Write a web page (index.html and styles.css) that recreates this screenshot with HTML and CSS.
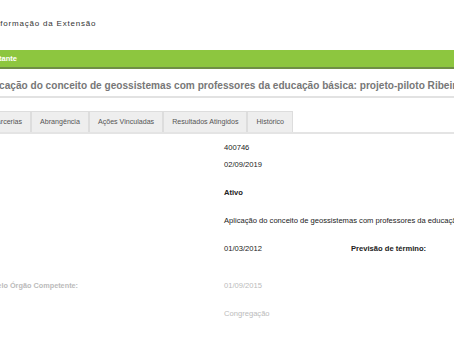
FILE: index.html
```html
<!DOCTYPE html>
<html lang="pt-BR">
<head>
  <meta charset="UTF-8">
  <title>Informação da Extensão</title>
  <link rel="stylesheet" href="styles.css">
</head>
<body>
  <div class="page">
    <h2 class="page-title">Informação da Extensão</h2>

    <div class="bar">Solicitante</div>

    <h1 class="action-title">Aplicação do conceito de geossistemas com professores da educação básica: projeto-piloto Ribeirão Preto</h1>

    <ul class="tabs">
      <li>Equipe</li>
      <li>Parcerias</li>
      <li>Abrangência</li>
      <li>Ações Vinculadas</li>
      <li>Resultados Atingidos</li>
      <li>Histórico</li>
    </ul>

    <div class="details">
      <div class="row tight"><span class="label">Código:</span><span class="value">400746</span></div>
      <div class="row"><span class="label">Data de cadastro:</span><span class="value">02/09/2019</span></div>
      <div class="row"><span class="label">Situação:</span><span class="value bold">Ativo</span></div>
      <div class="row"><span class="label">Título:</span><span class="value">Aplicação do conceito de geossistemas com professores da educação básica: projeto-piloto</span></div>
      <div class="row tall"><span class="label">Início:</span><span class="value short">01/03/2012</span><span class="label-inline">Previsão de término:</span></div>
      <div class="row muted"><span class="label">Data de aprovação pelo Órgão Competente:</span><span class="value">01/09/2015</span></div>
      <div class="row muted"><span class="label">Órgão:</span><span class="value">Congregação</span></div>
    </div>
  </div>
</body>
</html>
```

FILE: styles.css
```css
body {
  margin: 0;
  overflow: hidden;
  background: #fff;
  font-family: "Liberation Sans", Arial, sans-serif;
  color: #222;
}

.page {
  width: 760px;
  margin-left: -100px;
}

.page-title {
  margin: 0;
  padding: 19px 0 0 92px;
  height: 50px;
  box-sizing: border-box;
  font-size: 8px;
  font-weight: normal;
  letter-spacing: 0.8px;
  color: #333;
}

.bar {
  height: 17px;
  line-height: 18px;
  padding-left: 79px;
  background: #8dc63f;
  border-bottom: 2px solid #6f8f45;
  color: #fff;
  font-size: 7.5px;
  font-weight: bold;
}

.action-title {
  margin: 0;
  padding: 0 0 0 80px;
  height: 27px;
  line-height: 34px;
  border-bottom: 2px solid #e2e2e2;
  font-size: 10.1px;
  color: #777;
  white-space: nowrap;
}

.tabs {
  display: flex;
  list-style: none;
  margin: 13px 0 0 0;
  padding: 0 0 0 43px;
  border-bottom: 2px solid #e4e4e4;
}

.tabs li {
  padding: 0 8px;
  height: 20px;
  line-height: 21px;
  font-size: 7.1px;
  color: #555;
  background: #eee;
  border: 1px solid #ddd;
  border-bottom: none;
}

.details {
  padding-top: 7px;
  font-size: 7.6px;
}

.row {
  display: flex;
  height: 28px;
  line-height: 13px;
}

.row.tight {
  height: 17px;
}

.row.tall {
  height: 37px;
}

.row .label {
  width: 324px;
  flex-shrink: 0;
  text-align: left;
  padding-left: 40px;
  box-sizing: border-box;
  font-weight: bold;
  color: #fff;
  white-space: nowrap;
}

.row .value {
  white-space: nowrap;
}

.row .value.short {
  width: 127px;
}

.bold,
.label-inline {
  font-weight: bold;
}

.muted .label {
  color: #bbb;
  padding-left: 0;
  font-size: 7.3px;
  text-indent: 26px;
}

.muted .value {
  color: #bbb;
}
```
